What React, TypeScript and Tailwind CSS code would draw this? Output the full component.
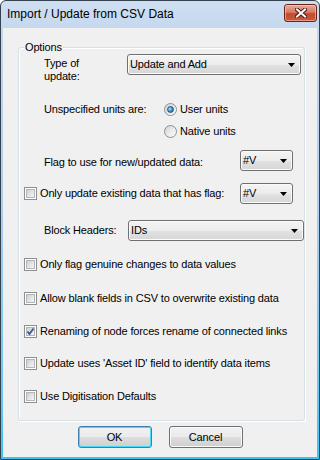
import React from 'react';

const FONT = { fontFamily: '"Liberation Sans", Arial, sans-serif' };

const Arrow = () => (
  <svg width="7" height="4" viewBox="0 0 7 4" className="shrink-0">
    <polygon points="0,0 7,0 3.5,4" fill="#000" />
  </svg>
);

const Combo = ({ value, className = '' }: { value: string; className?: string }) => (
  <div
    className={`flex h-[21px] shrink-0 items-center justify-between rounded-[3px] border border-[#707070] bg-[linear-gradient(to_bottom,#f4f4f4_0%,#ececec_50%,#e2e2e2_51%,#d6d6d6_100%)] pl-[2px] pr-[5px] shadow-[inset_0_0_0_1px_#fbfbfb] ${className}`}
  >
    <span className="leading-[13px]">{value}</span>
    <Arrow />
  </div>
);

const Radio = ({ checked }: { checked?: boolean }) => (
  <span className="flex h-[13px] w-[13px] shrink-0 items-center justify-center rounded-full border border-[#8e8f8f] bg-[linear-gradient(135deg,#d4d4d4,#fdfdfd)]">
    {checked ? (
      <span className="h-[7px] w-[7px] rounded-full border border-[#1d4f7a] bg-[radial-gradient(circle_at_35%_35%,#b6e6fc_0%,#3f9fd9_45%,#0d5a9c_100%)]" />
    ) : (
      <span className="h-[7px] w-[7px] rounded-full bg-[linear-gradient(135deg,#dcdcdc,#f8f8f8)]" />
    )}
  </span>
);

const Check = ({ checked }: { checked?: boolean }) => (
  <span className="flex h-[13px] w-[13px] shrink-0 items-center justify-center border border-[#8e8f8f] bg-white">
    <span className="relative flex h-[9px] w-[9px] items-center justify-center border border-[#b2b6bb] bg-[linear-gradient(135deg,#cbcfd5,#f6f6f6)]">
      {checked && (
        <svg width="9" height="9" viewBox="0 0 9 9" className="absolute -left-[1px] -top-[1px]">
          <path d="M1.5 4.5 L3.5 7 L7.5 1.5" fill="none" stroke="#3a5792" strokeWidth="1.8" />
        </svg>
      )}
    </span>
  </span>
);

const CheckRow = ({ label, checked, mt }: { label: string; checked?: boolean; mt: string }) => (
  <div className={`ml-[5px] flex h-[18px] items-center gap-[3px] ${mt}`}>
    <Check checked={checked} />
    <span className="leading-[13px]">{label}</span>
  </div>
);

const Button = ({ label, primary }: { label: string; primary?: boolean }) => (
  <button
    className={`flex h-[22px] w-[74px] items-center justify-center rounded-[3px] border bg-[linear-gradient(to_bottom,#f2f2f2_0%,#ebebeb_50%,#dddddd_51%,#cfcfcf_100%)] text-[11px] leading-[13px] text-black ${
      primary
        ? 'border-[#3c7fb1] shadow-[inset_0_0_0_1px_#48d8fb]'
        : 'border-[#707070] shadow-[inset_0_0_0_1px_#fbfbfb]'
    }`}
  >
    {label}
  </button>
);

export default function App() {
  return (
    <div className="h-[460px] w-[320px] overflow-hidden text-[11px] tracking-[-0.15px] text-black" style={FONT}>
      <div className="flex h-full flex-col rounded-t-[6px] border border-[#34414f] bg-[linear-gradient(to_bottom,#cfdff1_0%,#c2d6ed_8%,#afcdee_45%,#6cc6f0_85%,#3cc3ef_100%)] px-[2px] pb-[2px]">
        {/* Title bar */}
        <div className="flex h-[27px] shrink-0 items-start justify-between">
          <span className="mt-[6px] pl-[4px] text-[12px] leading-[15px] tracking-normal">Import / Update from CSV Data</span>
          <div className="mt-[3px] flex h-[18px] w-[33px] items-center justify-center rounded-[3px] border border-[#6a2518] bg-[linear-gradient(to_bottom,#e9ab9c_0%,#d77a63_45%,#c24a2e_55%,#c95a3d_100%)] shadow-[inset_0_0_0_1px_rgba(255,220,210,0.5)]">
            <svg width="12" height="10" viewBox="0 0 12 10">
              <path d="M2 1.5 L10 8.5 M10 1.5 L2 8.5" stroke="#4a1a12" strokeWidth="4" strokeLinecap="square" />
              <path d="M2 1.5 L10 8.5 M10 1.5 L2 8.5" stroke="#ffffff" strokeWidth="2" strokeLinecap="square" />
            </svg>
          </div>
        </div>

        {/* Client area */}
        <div className="flex flex-1 flex-col bg-[#f0f0f0]">
          <div className="relative ml-[15px] mt-[19px] flex h-[374px] w-[287px] flex-col rounded-[3px] border border-[#d5dfe5] shadow-[inset_1px_1px_0_#ffffff,1px_1px_0_#ffffff]">
            <span className="absolute -top-[7px] left-[5px] bg-[#f0f0f0] px-[1px] leading-[13px]">Options</span>

            {/* Type of update */}
            <div className="mt-[6px] flex items-start">
              <div className="ml-[25px] w-[83px] pt-[3px] leading-[13px]">
                Type of
                <br />
                update:
              </div>
              <Combo value="Update and Add" className="w-[174px]" />
            </div>

            {/* Unspecified units */}
            <div className="ml-[25px] mt-[17px] flex h-[18px] items-center">
              <span className="w-[120px] leading-[13px]">Unspecified units are:</span>
              <div className="flex items-center gap-[3px]">
                <Radio checked />
                <span className="leading-[13px]">User units</span>
              </div>
            </div>
            <div className="ml-[145px] mt-[4px] flex h-[18px] items-center gap-[3px]">
              <Radio />
              <span className="leading-[13px]">Native units</span>
            </div>

            {/* Flag */}
            <div className="mt-[10px] flex items-start">
              <span className="ml-[25px] w-[196px] pt-[6px] leading-[13px]">Flag to use for new/updated data:</span>
              <Combo value="#V" className="w-[53px]" />
            </div>

            {/* Only update */}
            <div className="mt-[12px] flex items-center">
              <div className="ml-[5px] flex w-[216px] items-center gap-[3px]">
                <Check />
                <span className="leading-[13px]">Only update existing data that has flag:</span>
              </div>
              <Combo value="#V" className="w-[53px]" />
            </div>

            {/* Block headers */}
            <div className="mt-[16px] flex items-center">
              <span className="ml-[25px] w-[84px] leading-[13px]">Block Headers:</span>
              <Combo value="IDs" className="w-[176px]" />
            </div>

            <CheckRow mt="mt-[14px]" label="Only flag genuine changes to data values" />
            <CheckRow mt="mt-[16px]" label="Allow blank fields in CSV to overwrite existing data" />
            <CheckRow mt="mt-[15px]" checked label="Renaming of node forces rename of connected links" />
            <CheckRow mt="mt-[14px]" label="Update uses 'Asset ID' field to identify data items" />
            <CheckRow mt="mt-[15px]" label="Use Digitisation Defaults" />
          </div>

          <div className="mt-[5px] flex justify-center gap-[17px]">
            <Button label="OK" primary />
            <Button label="Cancel" />
          </div>
        </div>
      </div>
    </div>
  );
}
